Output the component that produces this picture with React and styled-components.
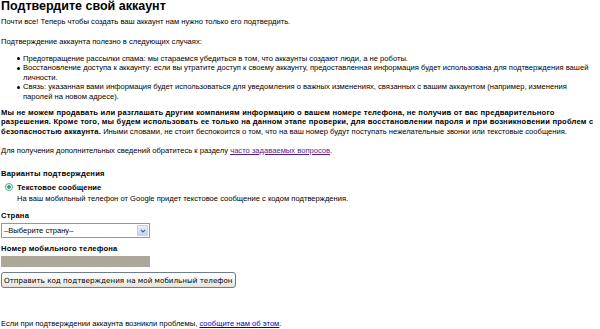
import React from 'react';
import styled, { createGlobalStyle } from 'styled-components';

const GlobalStyle = createGlobalStyle`
  html, body {
    margin: 0;
    padding: 0;
    background: #ffffff;
  }
  body {
    font-family: "Liberation Sans", Arial, sans-serif;
    color: #000000;
  }
`;

const Page = styled.div`
  width: 597px;
  padding: 0 2px 0 1px;
  font-size: 7.6px;
  line-height: 9.5px;
`;

const Title = styled.h1`
  margin: 0;
  font-size: 12.5px;
  line-height: 12px;
  font-weight: bold;
`;

const Text = styled.p`
  margin: ${(p) => p.$top || 0}px 0 0;
`;

const Strong = styled.b`
  letter-spacing: 0.2px;
`;

const BulletList = styled.ul`
  margin: 7.5px 0 0;
  padding-left: 22px;
  list-style: none;
`;

const Bullet = styled.li`
  position: relative;

  &::before {
    content: '';
    position: absolute;
    left: -6px;
    top: 3.5px;
    width: 3px;
    height: 3px;
    border-radius: 50%;
    background: #000000;
  }
`;

const Link = styled.a`
  color: ${(p) => (p.$visited ? '#551a8b' : '#0000cc')};
  text-decoration: underline;
`;

const Label = styled.div`
  margin-top: ${(p) => p.$top || 0}px;
  font-weight: bold;
  letter-spacing: 0.2px;
`;

const RadioRow = styled.label`
  display: flex;
  align-items: center;
  gap: 4px;
  margin-top: 4px;
  padding-left: 4px;
  font-weight: bold;
  letter-spacing: 0.1px;
`;

const Radio = styled.span`
  box-sizing: border-box;
  width: 8px;
  height: 8px;
  border: 1px solid #5a9bc9;
  border-radius: 50%;
  background: radial-gradient(circle, #27b02b 0 1.5px, #e8f3e4 2px, #ffffff 3px);
`;

const Hint = styled.div`
  margin-top: 2px;
  padding-left: 16px;
`;

const Select = styled.div`
  display: flex;
  align-items: center;
  justify-content: space-between;
  box-sizing: border-box;
  width: 149px;
  height: 15px;
  margin-top: 3px;
  padding: 0 1px 0 2px;
  border: 1px solid #7f9db9;
  background: #ffffff;
`;

const SelectArrow = styled.span`
  display: flex;
  align-items: center;
  justify-content: center;
  box-sizing: border-box;
  width: 11px;
  height: 11px;
  border: 1px solid #bfd0f2;
  border-radius: 1px;
  background: linear-gradient(#e9f0fd, #c3d4f9);
`;

const PhoneInput = styled.div`
  width: 149px;
  height: 11px;
  margin-top: 3px;
  background: #aca899;
`;

const SendButton = styled.button`
  display: block;
  box-sizing: border-box;
  margin-top: 5px;
  height: 16px;
  padding: 0 2px;
  border: 1px solid #6d7d90;
  border-radius: 3px;
  background: linear-gradient(#ffffff, #f2f1ec 60%, #e3e1d8);
  font-family: "DejaVu Sans", Tahoma, sans-serif;
  font-size: 7.2px;
  color: #000000;
`;

const Footer = styled.p`
  margin: 31px 0 0;
`;

export default function App() {
  return (
    <>
      <GlobalStyle />
      <Page>
        <Title>Подтвердите свой аккаунт</Title>
        <Text $top={4.6}>
          Почти все! Теперь чтобы создать ваш аккаунт нам нужно только его подтвердить.
        </Text>
        <Text $top={10.5}>Подтверждение аккаунта полезно в следующих случаях:</Text>
        <BulletList>
          <Bullet>Предотвращение рассылки спама: мы стараемся убедиться в том, что аккаунты создают люди, а не роботы.</Bullet>
          <Bullet>Восстановление доступа к аккаунту: если вы утратите доступ к своему аккаунту, предоставленная информация будет использована для подтверждения вашей личности.</Bullet>
          <Bullet>Связь: указанная вами информация будет использоваться для уведомления о важных изменениях, связанных с вашим аккаунтом (например, изменения паролей на новом адресе).</Bullet>
        </BulletList>
        <Text $top={6.5}>
          <Strong>
            Мы не можем продавать или разглашать другим компаниям информацию о вашем номере телефона, не получив от вас предварительного разрешения. Кроме того, мы будем использовать ее только на данном этапе проверки, для восстановлении пароля и при возникновении проблем с безопасностью аккаунта.
          </Strong>{' '}
          Иными словами, не стоит беспокоится о том, что на ваш номер будут поступать нежелательные звонки или текстовые сообщения.
        </Text>
        <Text $top={9.5}>
          Для получения дополнительных сведений обратитесь к разделу{' '}
          <Link href="#" $visited>часто задаваемых вопросов</Link>.
        </Text>
        <Label $top={14}>Варианты подтверждения</Label>
        <RadioRow>
          <Radio />
          Текстовое сообщение
        </RadioRow>
        <Hint>На ваш мобильный телефон от Google придет текстовое сообщение с кодом подтверждения.</Hint>
        <Label $top={7}>Страна</Label>
        <Select>
          –Выберите страну–
          <SelectArrow>
            <svg width="6" height="4" viewBox="0 0 6 4">
              <path d="M0.8 0.8 L3 3 L5.2 0.8" fill="none" stroke="#4d6185" strokeWidth="1.2" />
            </svg>
          </SelectArrow>
        </Select>
        <Label $top={5.6}>Номер мобильного телефона</Label>
        <PhoneInput />
        <SendButton>Отправить код подтверждения на мой мобильный телефон</SendButton>
        <Footer>
          Если при подтверждении аккаунта возникли проблемы, <Link href="#">сообщите нам об этом</Link>.
        </Footer>
      </Page>
    </>
  );
}
